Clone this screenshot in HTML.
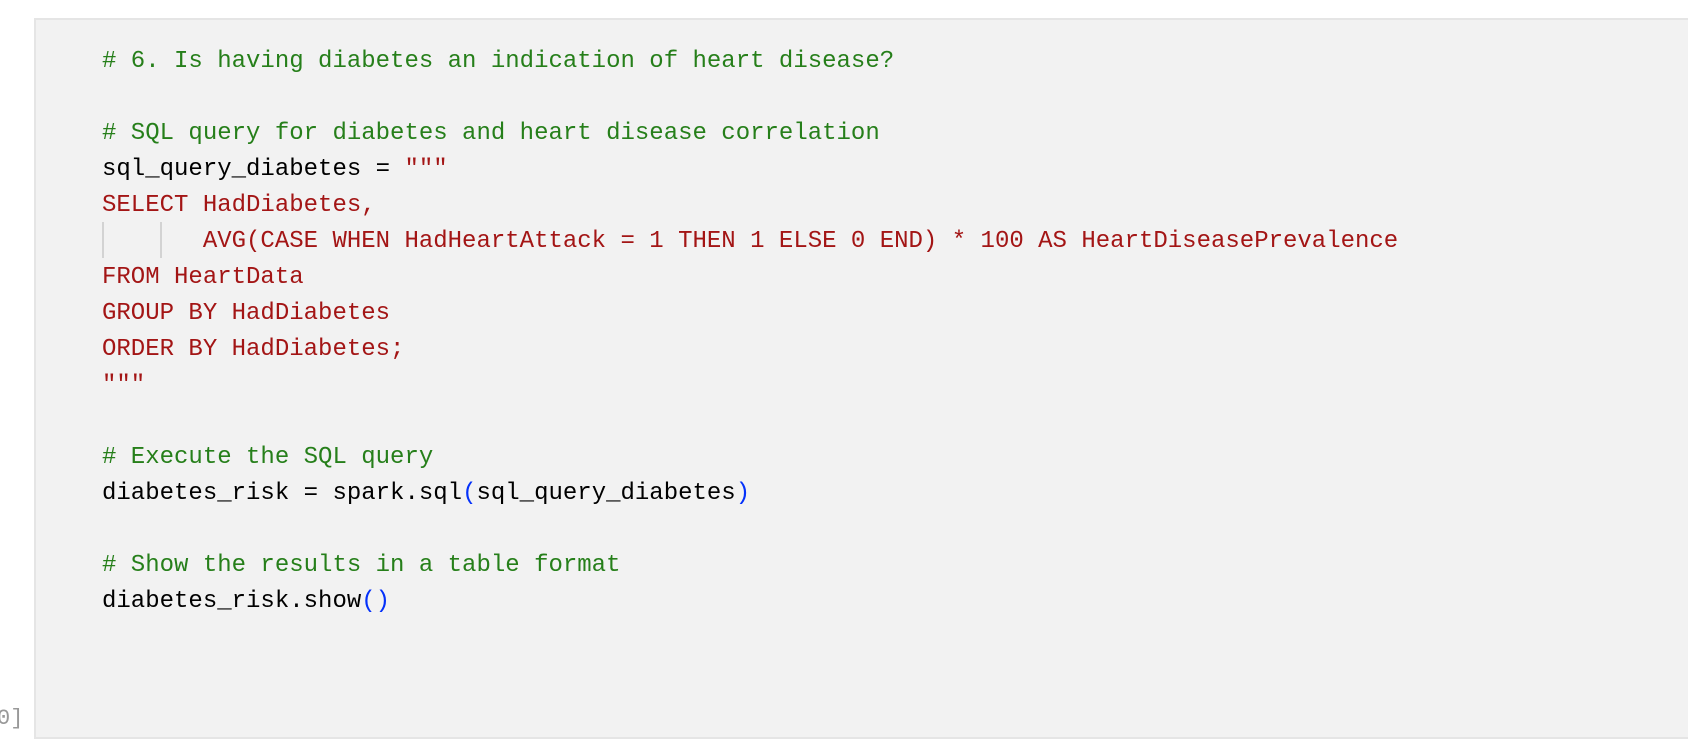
<!DOCTYPE html>
<html><head><meta charset="utf-8"><style>
html,body{margin:0;padding:0;background:#fff;width:1688px;height:750px;overflow:hidden;}
.cell{position:absolute;left:34px;top:18px;width:1670px;height:721px;background:#f2f2f2;border:2px solid #e5e5e5;box-sizing:border-box;}
pre{position:absolute;left:102px;top:44px;margin:0;font-family:"Liberation Mono","DejaVu Sans Mono",monospace;font-size:24px;line-height:36px;color:#000;white-space:pre;}
.c{color:#267f1a}.s{color:#a31515}.p{color:#0431fa}
.g{position:absolute;width:2px;background:#d3d3d3;top:222px;height:36px;}
.n{position:absolute;left:-3px;top:701px;font-family:"Liberation Mono",monospace;font-size:22px;line-height:36px;color:#999;}
</style></head><body>
<div class="cell"></div>
<div class="g" style="left:102px"></div>
<div class="g" style="left:160px"></div>
<pre><span class="c"># 6. Is having diabetes an indication of heart disease?</span>

<span class="c"># SQL query for diabetes and heart disease correlation</span>
sql_query_diabetes = <span class="s">"""</span>
<span class="s">SELECT HadDiabetes,</span>
<span class="s">       AVG(CASE WHEN HadHeartAttack = 1 THEN 1 ELSE 0 END) * 100 AS HeartDiseasePrevalence</span>
<span class="s">FROM HeartData</span>
<span class="s">GROUP BY HadDiabetes</span>
<span class="s">ORDER BY HadDiabetes;</span>
<span class="s">"""</span>

<span class="c"># Execute the SQL query</span>
diabetes_risk = spark.sql<span class="p">(</span>sql_query_diabetes<span class="p">)</span>

<span class="c"># Show the results in a table format</span>
diabetes_risk.show<span class="p">()</span></pre>
<div class="n">0]</div>
</body></html>
